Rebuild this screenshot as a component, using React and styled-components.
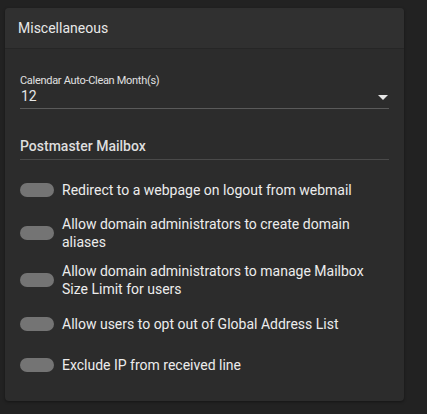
import React from "react";
import styled, { createGlobalStyle } from "styled-components";

const GlobalStyle = createGlobalStyle`
  html, body {
    margin: 0;
    padding: 0;
    background: #222222;
  }
  body {
    font-family: Roboto, "Liberation Sans", sans-serif;
    color: #e6e6e6;
  }
`;

const Page = styled.div`
  width: 427px;
  height: 414px;
  padding: 8px 23px 0 5px;
  box-sizing: border-box;
  background: #222222;
`;

const Card = styled.div`
  background: #2c2c2c;
  border-radius: 4px;
  height: 393px;
  overflow: hidden;
  box-shadow: 0 1px 3px rgba(0, 0, 0, 0.4);
`;

const CardHeader = styled.div`
  height: 40px;
  display: flex;
  align-items: center;
  padding: 0 13px;
  background: #303030;
  border-bottom: 1px solid #262626;
  font-size: 14px;
  color: #e8e8e8;
`;

const CardBody = styled.div`
  padding: 25px 15px 0;
`;

const SelectField = styled.div`
  display: flex;
  flex-direction: column;
  border-bottom: 1px solid #5a5a5a;
  padding-bottom: 3px;
`;

const FieldLabel = styled.div`
  font-size: 11px;
  letter-spacing: -0.3px;
  color: #e0e0e0;
  line-height: 13px;
`;

const SelectRow = styled.div`
  display: flex;
  justify-content: space-between;
  align-items: center;
  font-size: 14px;
  line-height: 18px;
  padding-left: 1px;
`;

const Caret = styled.span`
  width: 0;
  height: 0;
  border-left: 5px solid transparent;
  border-right: 5px solid transparent;
  border-top: 5px solid #e6e6e6;
  margin-right: 1px;
  margin-top: 2px;
`;

const SectionTitle = styled.div`
  margin-top: 29px;
  font-size: 14px;
  font-weight: 500;
  color: #dedede;
  padding-bottom: 5px;
  border-bottom: 1px solid #4a4a4a;
`;

const OptionList = styled.div`
  display: flex;
  flex-direction: column;
  margin-top: 11px;
  padding-right: 10px;
`;

const OptionRow = styled.label`
  display: flex;
  align-items: center;
  gap: 8px;
  min-height: ${(p) => p.$h}px;
  font-size: 14px;
  line-height: 18px;
  color: #ececec;
`;

const SwitchTrack = styled.span`
  flex: none;
  width: 34px;
  height: 14px;
  border-radius: 7px;
  background: #747474;
`;

const options = [
  { text: "Redirect to a webpage on logout from webmail", h: 38 },
  { text: "Allow domain administrators to create domain aliases", h: 48 },
  { text: "Allow domain administrators to manage Mailbox Size Limit for users", h: 46 },
  { text: "Allow users to opt out of Global Address List", h: 42 },
  { text: "Exclude IP from received line", h: 40 },
];

const App = () => (
  <>
    <GlobalStyle />
    <Page>
      <Card>
        <CardHeader>Miscellaneous</CardHeader>
        <CardBody>
          <SelectField>
            <FieldLabel>Calendar Auto-Clean Month(s)</FieldLabel>
            <SelectRow>
              12
              <Caret />
            </SelectRow>
          </SelectField>
          <SectionTitle>Postmaster Mailbox</SectionTitle>
          <OptionList>
            {options.map((o) => (
              <OptionRow key={o.text} $h={o.h}>
                <SwitchTrack />
                <span>{o.text}</span>
              </OptionRow>
            ))}
          </OptionList>
        </CardBody>
      </Card>
    </Page>
  </>
);

export default App;
